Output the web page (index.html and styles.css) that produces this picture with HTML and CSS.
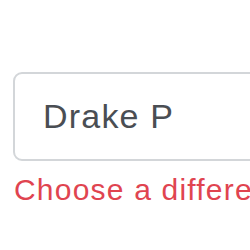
FILE: index.html
```html
<!DOCTYPE html>
<html>
<head>
<meta charset="utf-8">
<link rel="stylesheet" href="styles.css">
</head>
<body>
<div class="page">
  <div class="field">
    <div class="input">Drake P</div>
    <div class="feedback">Choose a different name.</div>
  </div>
</div>
</body>
</html>
```

FILE: styles.css
```css
html, body {
  margin: 0;
  padding: 0;
  background: #ffffff;
  overflow: hidden;
}
.page {
  width: 250px;
  height: 250px;
  overflow: hidden;
  padding: 72px 0 0 13px;
  box-sizing: border-box;
  font-family: "Liberation Sans", Arial, sans-serif;
}
.field {
  width: 340px;
}
.input {
  height: 89px;
  box-sizing: border-box;
  border: 2px solid #d3d6d9;
  border-radius: 9px;
  display: flex;
  align-items: center;
  padding-left: 28px;
  font-size: 34px;
  letter-spacing: 1.2px;
  color: #4a4e53;
  white-space: nowrap;
}
.feedback {
  margin-top: 6px;
  font-size: 30px;
  line-height: 45px;
  letter-spacing: 1.2px;
  color: #e04450;
  white-space: nowrap;
  padding-left: 1px;
}
```
